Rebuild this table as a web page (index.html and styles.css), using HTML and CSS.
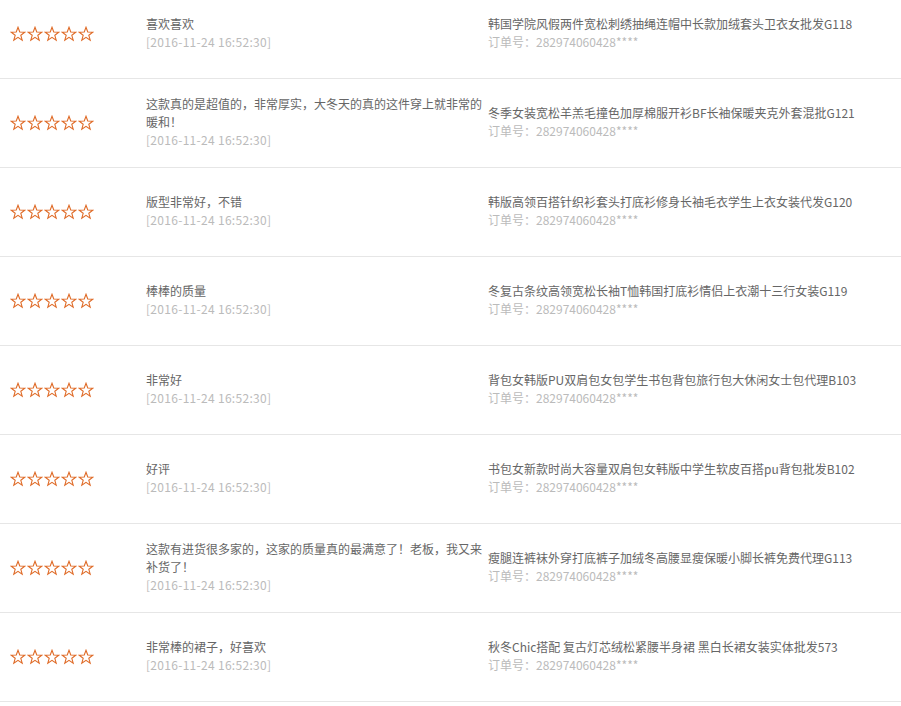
FILE: index.html
```html
<!DOCTYPE html>
<html lang="zh-CN">
<head>
<meta charset="utf-8">
<title>评价列表</title>
<link rel="stylesheet" href="styles.css">
</head>
<body>
<svg width="0" height="0" class="defs">
  <defs>
    <symbol id="star" viewBox="0 0 16 16">
      <path d="M8 1.3 L9.75 6.05 L14.8 6.2 L10.8 9.3 L12.2 14.2 L8 11.35 L3.8 14.2 L5.2 9.3 L1.2 6.2 L6.25 6.05 Z" fill="none" stroke="#df6a26" stroke-width="1.1" stroke-linejoin="miter"/>
    </symbol>
  </defs>
</svg>
<ul class="list">
  <li class="row">
    <div class="stars"><svg><use href="#star"/></svg><svg><use href="#star"/></svg><svg><use href="#star"/></svg><svg><use href="#star"/></svg><svg><use href="#star"/></svg></div>
    <div class="comment"><p class="text">喜欢喜欢</p><p class="time">[2016-11-24 16:52:30]</p></div>
    <div class="product"><p class="name">韩国学院风假两件宽松刺绣抽绳连帽中长款加绒套头卫衣女批发G118</p><p class="order">订单号：282974060428****</p></div>
  </li>
  <li class="row">
    <div class="stars"><svg><use href="#star"/></svg><svg><use href="#star"/></svg><svg><use href="#star"/></svg><svg><use href="#star"/></svg><svg><use href="#star"/></svg></div>
    <div class="comment"><p class="text">这款真的是超值的，非常厚实，大冬天的真的这件穿上就非常的暖和！</p><p class="time">[2016-11-24 16:52:30]</p></div>
    <div class="product"><p class="name">冬季女装宽松羊羔毛撞色加厚棉服开衫BF长袖保暖夹克外套混批G121</p><p class="order">订单号：282974060428****</p></div>
  </li>
  <li class="row">
    <div class="stars"><svg><use href="#star"/></svg><svg><use href="#star"/></svg><svg><use href="#star"/></svg><svg><use href="#star"/></svg><svg><use href="#star"/></svg></div>
    <div class="comment"><p class="text">版型非常好，不错</p><p class="time">[2016-11-24 16:52:30]</p></div>
    <div class="product"><p class="name">韩版高领百搭针织衫套头打底衫修身长袖毛衣学生上衣女装代发G120</p><p class="order">订单号：282974060428****</p></div>
  </li>
  <li class="row">
    <div class="stars"><svg><use href="#star"/></svg><svg><use href="#star"/></svg><svg><use href="#star"/></svg><svg><use href="#star"/></svg><svg><use href="#star"/></svg></div>
    <div class="comment"><p class="text">棒棒的质量</p><p class="time">[2016-11-24 16:52:30]</p></div>
    <div class="product"><p class="name">冬复古条纹高领宽松长袖T恤韩国打底衫情侣上衣潮十三行女装G119</p><p class="order">订单号：282974060428****</p></div>
  </li>
  <li class="row">
    <div class="stars"><svg><use href="#star"/></svg><svg><use href="#star"/></svg><svg><use href="#star"/></svg><svg><use href="#star"/></svg><svg><use href="#star"/></svg></div>
    <div class="comment"><p class="text">非常好</p><p class="time">[2016-11-24 16:52:30]</p></div>
    <div class="product"><p class="name">背包女韩版PU双肩包女包学生书包背包旅行包大休闲女士包代理B103</p><p class="order">订单号：282974060428****</p></div>
  </li>
  <li class="row">
    <div class="stars"><svg><use href="#star"/></svg><svg><use href="#star"/></svg><svg><use href="#star"/></svg><svg><use href="#star"/></svg><svg><use href="#star"/></svg></div>
    <div class="comment"><p class="text">好评</p><p class="time">[2016-11-24 16:52:30]</p></div>
    <div class="product"><p class="name">书包女新款时尚大容量双肩包女韩版中学生软皮百搭pu背包批发B102</p><p class="order">订单号：282974060428****</p></div>
  </li>
  <li class="row">
    <div class="stars"><svg><use href="#star"/></svg><svg><use href="#star"/></svg><svg><use href="#star"/></svg><svg><use href="#star"/></svg><svg><use href="#star"/></svg></div>
    <div class="comment"><p class="text">这款有进货很多家的，这家的质量真的最满意了！老板，我又来补货了！</p><p class="time">[2016-11-24 16:52:30]</p></div>
    <div class="product"><p class="name">瘦腿连裤袜外穿打底裤子加绒冬高腰显瘦保暖小脚长裤免费代理G113</p><p class="order">订单号：282974060428****</p></div>
  </li>
  <li class="row">
    <div class="stars"><svg><use href="#star"/></svg><svg><use href="#star"/></svg><svg><use href="#star"/></svg><svg><use href="#star"/></svg><svg><use href="#star"/></svg></div>
    <div class="comment"><p class="text">非常棒的裙子，好喜欢</p><p class="time">[2016-11-24 16:52:30]</p></div>
    <div class="product"><p class="name">秋冬Chic搭配 复古灯芯绒松紧腰半身裙 黑白长裙女装实体批发573</p><p class="order">订单号：282974060428****</p></div>
  </li>
</ul>
</body>
</html>
```
FILE: styles.css
```css
html, body {
  margin: 0;
  padding: 0;
  background: #fff;
}
body {
  font-family: "Noto Sans CJK SC", "Noto Sans", sans-serif;
  font-size: 12px;
  line-height: 18px;
  color: #666;
}
.defs {
  position: absolute;
  width: 0;
  height: 0;
}
.list {
  list-style: none;
  margin: -10px 0 0 0;
  padding: 0;
}
.row {
  display: flex;
  align-items: center;
  height: 88px;
  border-bottom: 1px solid #e6e6e6;
}
.stars {
  flex: none;
  width: 136px;
  padding-left: 10px;
  box-sizing: border-box;
  display: flex;
  gap: 1px;
}
.stars svg {
  width: 16px;
  height: 16px;
  display: block;
}
.comment {
  flex: none;
  width: 342px;
  margin-left: 10px;
  padding-bottom: 2px;
}
.product {
  flex: 1;
  padding-bottom: 2px;
}
p {
  margin: 0;
}
.text, .name {
  color: #666;
}
.time, .order {
  color: #bbb;
}
.time {
  letter-spacing: 0.3px;
}
```
